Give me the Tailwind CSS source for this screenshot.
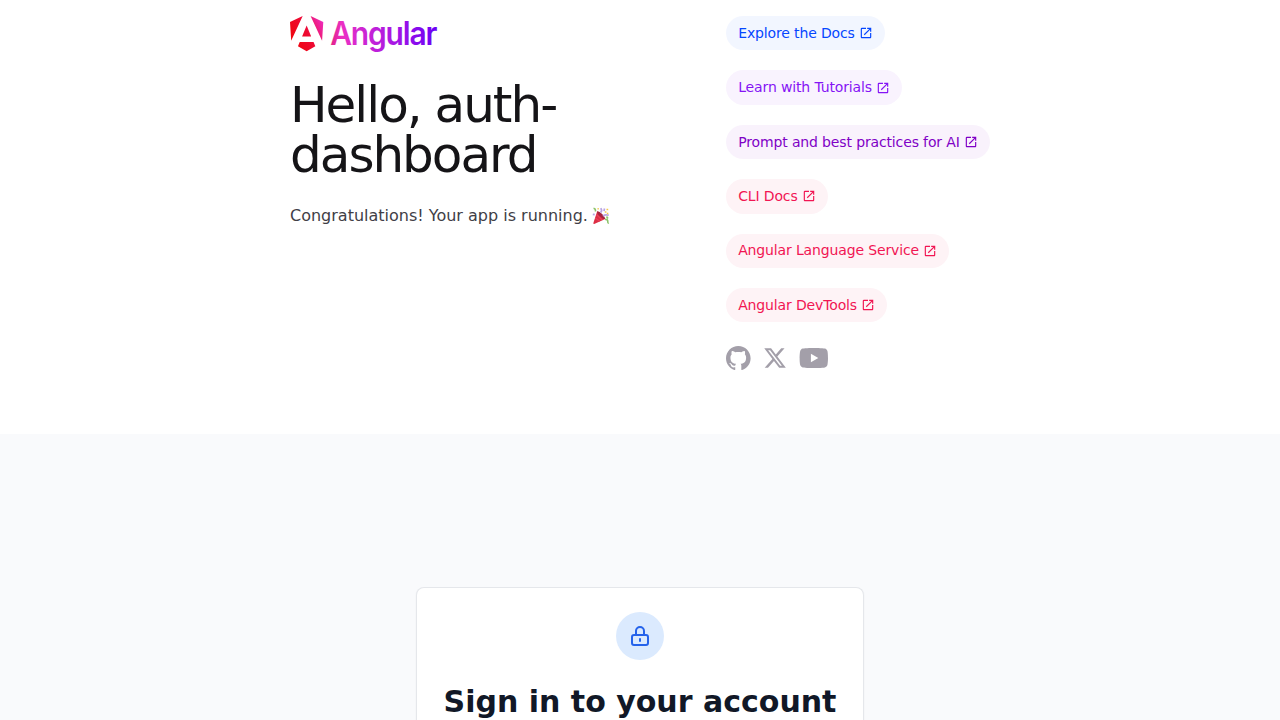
<!DOCTYPE html>
<html lang="en">
<head>
<meta charset="utf-8">
<meta name="viewport" content="width=device-width, initial-scale=1">
<title>AuthDashboard</title>
<script src="https://cdn.jsdelivr.net/npm/@tailwindcss/browser@4"></script>
</head>
<body class="flex h-screen flex-col overflow-hidden bg-white font-['DejaVu_Sans',sans-serif]">
<svg class="hidden">
  <symbol id="open" viewBox="0 -960 960 960"><path fill="currentColor" d="M200-120q-33 0-56.500-23.500T120-200v-560q0-33 23.500-56.500T200-840h280v80H200v560h560v-280h80v280q0 33-23.500 56.500T760-120H200Zm188-212-56-56 372-372H560v-80h280v280h-80v-144L388-332Z"/></symbol>
</svg>
<main class="flex h-[433.600px] shrink-0 justify-center p-4">
  <div class="flex w-[700px]">
    <div class="w-[436.200px] shrink-0">
      <svg class="block h-[35.830px] w-[147.200px] overflow-visible" viewBox="0 0 982 239" fill="none">
        <defs>
          <linearGradient id="mark" gradientUnits="userSpaceOnUse" x1="0" y1="150" x2="222" y2="40">
            <stop stop-color="#F0060B"/><stop offset=".5" stop-color="#EE0A34"/><stop offset="1" stop-color="#EE2CC0"/>
          </linearGradient>
          <linearGradient id="word" gradientUnits="userSpaceOnUse" x1="0" y1="150" x2="770" y2="120">
            <stop stop-color="#DE2080"/><stop offset=".12" stop-color="#EC2FC4"/><stop offset=".3" stop-color="#D027D2"/><stop offset=".6" stop-color="#A816E4"/><stop offset="1" stop-color="#6C00F5"/>
          </linearGradient>
        </defs>
        <path fill="url(#mark)" d="m222.077 39.192-8.019 125.923L137.387 0l84.690 39.192Zm-53.105 162.825-57.933 33.056-57.934-33.056 11.783-28.556h92.301l11.783 28.556ZM111.039 62.675l30.357 73.803H80.681l30.358-73.803ZM7.937 165.115 0 39.192 84.690 0 7.937 165.115Z"/>
        <text class="font-['Inter',sans-serif] font-semibold" transform="translate(268 191) scale(.93 1)" font-size="215" textLength="770" lengthAdjust="spacing" fill="url(#word)">Angular</text>
      </svg>
      <h1 class="mt-7 text-[50px] leading-none tracking-[-2px] text-[oklch(19.37%_0.006_300.98)]">Hello, auth-<br>dashboard</h1>
      <p class="mt-6 flex items-center text-base text-[oklch(36.98%_0.014_302.71)]">Congratulations! Your app is running.
        <svg class="ml-1 size-[18px]" viewBox="0 0 18 18" fill="none" role="img" aria-label="party popper">
          <path d="M1.200 16.600 5.200 4.200 13.200 12 2.200 17Z" fill="#DD2E44"/>
          <path d="M5.200 4.200c2.600-.2 7.600 4.600 8 7.800-2.200.8-8.800-4.800-8-7.800Z" fill="#A5253E"/>
          <path d="m3.300 11 4.500 3.300M4.500 7.600l5.800 5.500" stroke="#E8415A" stroke-width="1.300"/>
          <path d="M1.500 1.500c1.800-.4 2.100 1.500 2 3M13 12.500c1.700-.5 3 .4 2.800 2.300 0 1 .6 1.200 1 1M14.500 9.500l1.500 2" stroke="#8CC36A" stroke-width="1.600"/>
          <path d="M8.500 5.500c1.700-1 1.300-2.500.3-4.300M11 9c1.500-1.300 3.300-1.500 5.800-.7M.8 7.300l1.900.4M12.500 1.500l-.5 2.700" stroke="#B9A3E3" stroke-width="1.700"/>
          <path d="M12.800 5h1.600M14.500 2.500h1.700M14.800 6.600h1.500M5.500 1.800h1.300" stroke="#F4C84A" stroke-width="1.500"/>
        </svg>
      </p>
    </div>
    <div class="flex flex-col items-start">
      <nav class="flex flex-col items-start gap-5 text-sm/[22.400px] tracking-[-0.140px]">
        <a class="flex items-center rounded-[44px] bg-[oklch(51.01%_0.274_263.83)]/5 px-3 py-1.5 text-[oklch(51.01%_0.274_263.83)]">Explore the Docs<svg class="ml-1 size-3.5"><use href="#open"/></svg></a>
        <a class="flex items-center rounded-[44px] bg-[oklch(53.18%_0.28_296.97)]/5 px-3 py-1.5 text-[oklch(53.18%_0.28_296.97)]">Learn with Tutorials<svg class="ml-1 size-3.5"><use href="#open"/></svg></a>
        <a class="flex items-center rounded-[44px] bg-[oklch(47.66%_0.246_305.88)]/5 px-3 py-1.5 text-[oklch(47.66%_0.246_305.88)]">Prompt and best practices for AI<svg class="ml-1 size-3.5"><use href="#open"/></svg></a>
        <a class="flex items-center rounded-[44px] bg-[oklch(61.42%_0.238_15.34)]/5 px-3 py-1.5 text-[oklch(61.42%_0.238_15.34)]">CLI Docs<svg class="ml-1 size-3.5"><use href="#open"/></svg></a>
        <a class="flex items-center rounded-[44px] bg-[oklch(61.42%_0.238_15.34)]/5 px-3 py-1.5 text-[oklch(61.42%_0.238_15.34)]"><span class="pb-[1.400px] leading-[21px]">Angular Language Service</span><svg class="ml-1 size-3.5"><use href="#open"/></svg></a>
        <a class="flex items-center rounded-[44px] bg-[oklch(61.42%_0.238_15.34)]/5 px-3 py-1.5 text-[oklch(61.42%_0.238_15.34)]">Angular DevTools<svg class="ml-1 size-3.5"><use href="#open"/></svg></a>
      </nav>
      <div class="mt-6 flex items-center gap-[11.680px] text-[oklch(70.9%_0.015_304.04)]">
        <svg width="25" height="24" viewBox="0 0 25 24" class="overflow-visible" fill="currentColor"><path d="M12.3047 0C5.50634 0 0 5.50942 0 12.3047C0 17.7423 3.52529 22.3535 8.41332 23.9787C9.02856 24.0946 9.25414 23.7142 9.25414 23.3871C9.25414 23.0949 9.24389 22.3207 9.23876 21.2953C5.81601 22.0377 5.09414 19.6444 5.09414 19.6444C4.53427 18.2243 3.72524 17.8449 3.72524 17.8449C2.61064 17.082 3.81137 17.0973 3.81137 17.0973C5.04697 17.1835 5.69604 18.3647 5.69604 18.3647C6.79321 20.2463 8.57636 19.7029 9.27978 19.3881C9.39052 18.5924 9.70736 18.0499 10.0591 17.7423C7.32641 17.4347 4.45429 16.3765 4.45429 11.6618C4.45429 10.3185 4.9311 9.22133 5.72065 8.36C5.58222 8.04931 5.16694 6.79833 5.82831 5.10337C5.82831 5.10337 6.85883 4.77319 9.2121 6.36459C10.1965 6.09082 11.2424 5.95546 12.2883 5.94931C13.3342 5.95546 14.3801 6.09082 15.3644 6.36459C17.7023 4.77319 18.7328 5.10337 18.7328 5.10337C19.3942 6.79833 18.9789 8.04931 18.8559 8.36C19.6403 9.22133 20.1171 10.3185 20.1171 11.6618C20.1171 16.3888 17.2409 17.4296 14.5031 17.7321C14.9338 18.1012 15.3337 18.8559 15.3337 20.0084C15.3337 21.6552 15.3183 22.978 15.3183 23.3779C15.3183 23.7009 15.5336 24.0854 16.1642 23.9623C21.0871 22.3484 24.6094 17.7341 24.6094 12.3047C24.6094 5.50942 19.0999 0 12.3047 0Z"/></svg>
        <svg width="24" height="24" viewBox="0 0 24 24" fill="currentColor"><path d="M18.244 2.250h3.308l-7.227 8.260 8.502 11.240H16.170l-5.214-6.817L4.990 21.750H1.680l7.730-8.835L1.254 2.250H8.080l4.713 6.231zm-1.161 17.520h1.833L7.084 4.126H5.117z"/></svg>
        <svg width="29" height="20" viewBox="0 0 29 20" fill="currentColor"><path fill-rule="evenodd" d="M27.4896 1.52422C27.9301 1.96749 28.2463 2.51866 28.4068 3.12258C29.0004 5.35161 29.0004 10 29.0004 10C29.0004 10 29.0004 14.6484 28.4068 16.8774C28.2463 17.4813 27.9301 18.0325 27.4896 18.4758C27.0492 18.9191 26.5 19.2389 25.8972 19.4032C23.6778 20 14.8068 20 14.8068 20C14.8068 20 5.93586 20 3.71651 19.4032C3.11363 19.2389 2.56449 18.9191 2.12405 18.4758C1.68361 18.0325 1.36732 17.4813 1.20683 16.8774C0.613281 14.6484 0.613281 10 0.613281 10C0.613281 10 0.613281 5.35161 1.20683 3.12258C1.36732 2.51866 1.68361 1.96749 2.12405 1.52422C2.56449 1.08095 3.11363 0.76113 3.71651 0.596774C5.93586 0 14.8068 0 14.8068 0C14.8068 0 23.6778 0 25.8972 0.596774C26.5 0.76113 27.0492 1.08095 27.4896 1.52422ZM19.3229 10L11.9036 5.77905V14.221L19.3229 10Z"/></svg>
      </div>
    </div>
  </div>
</main>
<section class="flex min-h-0 flex-1 justify-center overflow-hidden bg-[#f9fafc] pt-[153.400px]">
  <div class="flex w-[448px] flex-col items-center rounded-t-lg border border-b-0 border-gray-200 bg-white px-6 pt-6 shadow-xs">
    <div class="flex size-12 shrink-0 items-center justify-center rounded-full bg-[#dbeafe]">
      <svg class="size-6 text-[#2563eb]" viewBox="0 0 24 24" fill="none" stroke="currentColor" stroke-width="2" stroke-linecap="round" stroke-linejoin="round"><path d="M12 15v2m-6 4h12a2 2 0 002-2v-6a2 2 0 00-2-2H6a2 2 0 00-2 2v6a2 2 0 002 2zm10-10V7a4 4 0 00-8 0v4h8z"/></svg>
    </div>
    <h2 class="mt-6 whitespace-nowrap text-3xl font-bold text-[#111827]">Sign in to your account</h2>
  </div>
</section>
</body>
</html>
